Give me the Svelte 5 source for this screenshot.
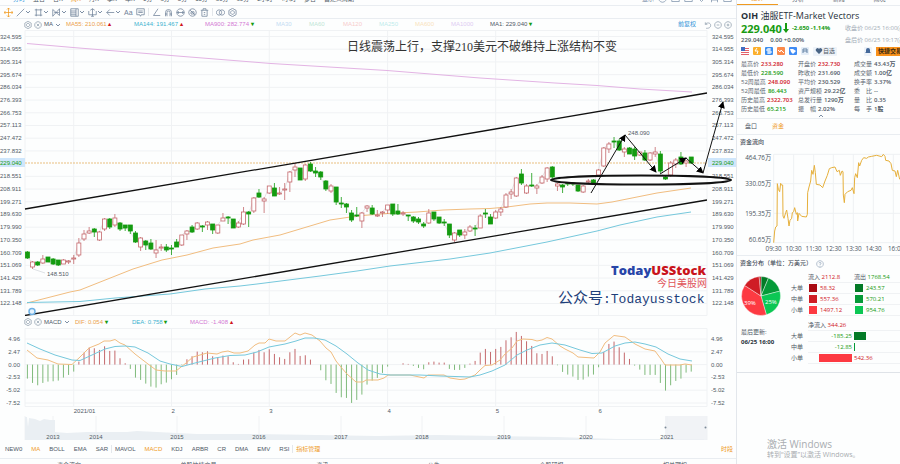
<script>
  const periods = [
    "分时", "五日", "日K", "周K", "月K", "季K", "年K", "1分", "3分", "5分", "15分", "30分",
    "60分", "2小时", "4小时", "多日",
  ];
  const footLinks = ["资金流向", "单股快捷交易", "资讯", "公告", "个股研报", "相关期权"];
  const indicators = ["NEW0", "MA", "BOLL", "EMA", "SAR"];
  const subIndicators = ["MAVOL", "MACD", "KDJ", "ARBR", "CR", "DMA", "EMV", "RSI"];

  // toolbar icons on a 12x12 grid
  const drawTools = [
    { name: "直线", d: "M1 11L11 1" },
    { name: "矩形", d: "M3 1v10M9 1v10M1 2.500h10M1 9.500h10" },
    { name: "形态", d: "M1 11V2l9 8V1L1 11M3 6h6" },
    { name: "斐波那契", d: "M1 1h10v10H1zM1 4h7M1 6.500h7M1 9h7M8 1v10" },
    { name: "测量", d: "M6 1v10M3 3l3-2 3 2M1 4v5h10V4M4 11h4" },
    { name: "箭头", d: "M11 6H1M5 2L1 6l4 4" },
  ];
  const plainTools = [
    { name: "角度", d: "M8 1L2 10h9" },
    { name: "磁铁", d: "M2 11V6a4 4 0 0 1 8 0v5M2 8h2V6a2 2 0 0 1 4 0v2h2M4 8v3M8 8v3" },
    { name: "锁定", d: "M6 1a5 5 0 1 0 .01 0M1 6h10M3 4v4M9 4v4" },
    { name: "隐藏", d: "M6 1a5 5 0 1 0 .01 0M2.500 2.500l7 7M4 5h4v3H4z" },
    { name: "删除", d: "M1 3h10M4 3V1h4v2M2.500 3v8h7V3M5 6h2M5 8.500h2" },
  ];
  const moreTools = [
    { name: "对比", d: "M4 2.500a3.500 3.500 0 1 0 .01 0M8 2.500a3.500 3.500 0 1 0 .01 0" },
    { name: "设置", d: "M6 .5l4.800 2.700v5.600L6 11.500 1.200 8.800V3.200zM6 3.500a2.500 2.500 0 1 0 .01 0" },
  ];

  const legend = [
    { text: "MA30", color: "#c3dcf3" },
    { text: "MA60", color: "#bfe6d6" },
    { text: "MA120", color: "#f7cccc" },
    { text: "MA250", color: "#bdecec" },
    { text: "MA600", color: "#f9e3bd" },
    { text: "MA1000", color: "#ddccf2" },
  ];

  const priceLabels = Array.from({ length: 22 }, (_, i) => ({
    y: 36.5 + i * 12.714,
    text: (324.595 - i * 9.640324).toFixed(3),
  })).filter((l, i) => i !== 10);
  const macdLabels = ["4.96", "2.47", "0.00", "-2.53", "-5.02", "-7.52"];
  const months = [
    [9, "2021/01"], [28, "2"], [47, "3"], [70, "4"], [91, "5"], [111, "6"],
  ];
  const years = [53, 96, 177, 259, 341, 422, 504, 586, 667];

  const xAt = (i) => 27.4 + i * 5.146;

  // direction, body top, body bottom, high, low
  const candles = `g252,258,251,259 r262,267,261,269 g262,265,261,266 r259,263,255,264 g257,262,257,262
    g259,264,258,265 g260,265,260,266 r260,264,259,264 r261,262,260,264 r258,259,255,264
    r243,255,238,257 r234,239,230,241 r231,233,227,234 g229,232,228,237 r232,240,231,241
    r219,229,218,231 g219,227,218,229 r218,225,214,227 g223,229,222,231 g225,228,225,231
    g225,231,225,234 g233,242,231,243 r238,247,237,251 g241,245,240,250 g243,249,239,250
    r250,253,240,258 r247,248,244,251 g247,250,244,252 g248,249,245,255 g242,247,239,247
    r235,245,235,246 r231,234,230,240 g227,232,225,233 r223,229,222,230 g226,227,225,232
    r222,225,221,230 g224,230,224,234 r225,233,225,234 r218,221,213,221 g217,218,216,224
    g219,228,219,228 r223,227,221,228 r212,224,207,225 g212,214,211,227 r198,211,197,213
    g193,197,189,198 r199,201,197,213 r186,193,186,194 g188,196,183,196 r193,194,187,195
    r189,190,183,200 r172,182,171,192 r167,170,163,177 g168,180,168,180 r165,179,164,181
    g164,171,162,172 g171,173,167,177 g172,177,171,180 g181,189,180,191 r186,191,184,193
    g187,202,187,205 g203,204,197,208 g204,207,203,213 g213,220,210,222 g215,216,207,217
    r213,221,212,228 r206,208,205,212 g208,214,205,215 r215,216,210,217 r212,213,211,217
    r205,210,205,214 g204,214,204,216 g211,214,204,215 r213,214,211,216 g215,216,215,221
    g217,221,216,223 g219,222,217,224 g224,226,222,228 r213,223,209,224 g212,219,212,221
    g217,223,217,224 g222,223,219,226 g224,235,224,238 r233,240,232,242 g230,235,230,237
    r232,235,229,239 r227,231,225,232 g228,229,225,236 r216,228,214,228 g213,214,209,218
    g217,224,214,224 r212,218,210,219 r209,212,207,216 r195,207,193,208 r192,194,189,199
    r178,196,177,197 g174,183,169,185 r186,193,184,194 g185,186,173,187 r186,188,184,194
    r177,183,175,184 r168,179,167,182 g167,177,166,179 r184,186,183,191 g185,187,184,193
    g183,184,182,186 g183,184,182,186 g185,191,185,192 r186,192,185,193 r181,182,179,184
    g180,183,179,184 r170,175,169,177 r148,166,147,167 r144,149,142,153 g141,142,137,148
    g141,150,139,151 r149,152,147,157 g148,154,147,154 g149,156,147,160 r152,155,152,156
    g153,160,150,161 r153,160,152,161 r152,154,147,157 g154,171,151,173 g177,179,176,180
    r163,175,161,177 r160,164,158,168 g157,164,152,165 r161,163,160,167 g157,163,157,164`
    .split(/\s+/)
    .map((s, i) => {
      const [top, bottom, high, low] = s.slice(1).split(",").map(Number);
      return { x: xAt(i), up: s[0] === "r", top, bottom, high, low };
    });
  const closes = candles.map((c) => `${c.x},${c.up ? c.top : c.bottom}`).join(" ");

  const bars = [
    -42, -55, -62, -55, -51, -50, -48, -39, -31, -21, 9, 36, 51, 49, 44, 55, 41, 42, 19, 4, -13, -39,
    -46, -57, -66, -69, -59, -54, -44, -31, -2, 16, 25, 39, 37, 40, 25, 22, 27, 25, 7, 2, 15, 16, 36,
    44, 37, 46, 32, 22, 17, 37, 47, 26, 28, 15, 0, -17, -47, -58, -85, -98, -100, -115, -106, -90, -60,
    -48, -40, -25, -6, 0, 0, 4, 2, -4, -10, -14, 7, 9, 6, 6, -13, -16, -16, -10, 3, 11, 36, 47, 38, 47,
    53, 73, 82, 98, 86, 70, 56, 34, 32, 41, 25, -2, -22, -30, -36, -46, -45, -36, -30, -8, 38, 62, 69,
    52, 36, 17, -3, -15, -31, -31, -31, -55, -78, -62, -49, -42, -24, -21,
  ];

  const stats = [
    ["最高价", "233.280", "red"], ["开盘价", "232.730", "red"], ["成交量", "43.43万", ""],
    ["最低价", "228.590", "green"], ["昨收价", "231.690", ""], ["成交额", "1.00亿", ""],
    ["52周最高", "248.090", "red"], ["平均价", "230.529", ""], ["换手率", "3.37%", ""],
    ["52周最低", "86.443", "green"], ["资产规模", "29.22亿", ""], ["委　比", "--", ""],
    ["历史最高", "2322.703", "red"], ["总发行量", "1290万", ""], ["量　比", "0.35", ""],
    ["历史最低", "65.215", "green"], ["振　幅", "2.02%", ""], ["每　手", "1股", ""],
  ];

  const flows = [
    { size: "大单", inflow: "58.32", inColor: "#a90b12", outflow: "243.57", outColor: "#037a26" },
    { size: "中单", inflow: "557.36", inColor: "#cf1d25", outflow: "570.21", outColor: "#059a38" },
    { size: "小单", inflow: "1497.12", inColor: "#fd3a42", outflow: "954.76", outColor: "#0cc754" },
  ];
  const nets = [
    { size: "大单", value: -185.25, color: "#037a26" },
    { size: "中单", value: -12.85, color: "#059a38" },
    { size: "小单", value: 542.36, color: "#fd3a42" },
  ];

  const total = flows.reduce((sum, f) => sum + Number(f.inflow) + Number(f.outflow), 0);
  let angle = 0;
  const slices = [
    ...flows.map((f) => [f.outflow, f.outColor]),
    ...flows.map((f) => [f.inflow, f.inColor]).reverse(),
  ].map(([value, color]) => {
    const from = angle;
    angle += (value / total) * Math.PI * 2;
    const p = (a) => `${20 + 19.5 * Math.sin(a)} ${20 - 19.5 * Math.cos(a)}`;
    return { color, d: `M20 20L${p(from)}A19.5 19.5 0 0 1 ${p(angle)}Z` };
  });
</script>

{#snippet icon(d)}
  <svg class="icon" viewBox="0 0 12 12" aria-hidden="true"><path {d} /></svg>
{/snippet}

{#snippet chevron()}
  <svg class="chevron" viewBox="0 0 6 6" aria-hidden="true"><path d="M1 2l2 2 2-2" /></svg>
{/snippet}

{#snippet paneButtons()}
  <span class="pane-buttons">
    <button aria-label="设置">{@render icon(moreTools[1].d)}</button>
    <button aria-label="关闭">{@render icon("M6 1a5 5 0 1 0 .01 0M4 4l4 4M8 4l-4 4")}</button>
  </span>
{/snippet}

<div class="app">
  <main>
    <nav class="periods">
      {#each periods as period, i}
        <a href="#period" class:blue={i === 0} class:orange={i === 3}>{period}</a>
      {/each}
      <a href="#period">自定义周期</a>
      <span class="right">
        <a href="#show">显示</a>
        {@render icon("M6 1a5 5 0 1 0 .01 0M4 6h4")}
        {@render icon("M1 1h10v9H1z")}
        {@render icon("M1 1h10v9H1z")}
        {@render icon("M3 1h6v6l-3 3-3-3z")}
        {@render icon("M2 1v10M2 8h8M10 1v10")}
        {@render icon("M1 1h10v9H1z")}
      </span>
    </nav>

    <div class="toolbar">
      <button class="orange" aria-label="移动">
        {@render icon("M6 0v12M0 6h12M4 2l2-2 2 2M4 10l2 2 2-2M2 4L0 6l2 2M10 4l2 2-2 2")}
      </button>
      {#each drawTools as tool}
        <button aria-label={tool.name}>{@render icon(tool.d)}{@render chevron()}</button>
      {/each}
      <button>Aa</button>
      <button aria-label="注释">{@render icon("M1 1h10v8H7l-1 2-1-2H1zM3 4h6M3 6h6")}</button>
      <i></i>
      {#each plainTools as tool}
        <button aria-label={tool.name}>{@render icon(tool.d)}</button>
      {/each}
      <i></i>
      {#each moreTools as tool}
        <button aria-label={tool.name}>{@render icon(tool.d)}</button>
      {/each}
    </div>

    <div class="pane-head price-head">
      <span class="pane-name">{@render paneButtons()}MA {@render chevron()}</span>
      <span class="ma55">MA55: 210.061 <b class="red">▴</b></span>
      <span class="ma144">MA144: 191.467 <b class="red">▴</b></span>
      <span class="ma900">MA900: 282.774 <b class="green">▾</b></span>
      {#each legend as item}
        <span style:color={item.color}>{item.text}</span>
      {/each}
      <span>MA1: 229.040 <b class="green">▾</b></span>
      <span class="pane-tools">
        <a href="#adjust">前复权</a>
        <button aria-label="重置">{@render icon("M2 2v3h3M2 5c2-3 8-3 8 1.500S5 11 3 11")}</button>
        <button aria-label="缩小">{@render icon("M6 1a5 5 0 1 0 .01 0M4 6h4")}</button>
        <button aria-label="放大">{@render icon("M6 1a5 5 0 1 0 .01 0M4 6h4M6 4v4")}</button>
      </span>
    </div>

    <svg class="chart" viewBox="0 30 736 286">
      <defs>
        <marker id="head" viewBox="0 0 8 8" refX="7" refY="4" markerWidth="7" markerHeight="7" markerUnits="userSpaceOnUse" orient="auto">
          <path d="M0 0L8 4L0 8Z" />
        </marker>
      </defs>
      <g class="grid">
        {#each priceLabels as label}
          <line x1="25" x2="707" y1={label.y} y2={label.y} />
        {/each}
        {#each months as [i]}
          <line x1={xAt(i)} x2={xAt(i)} y1="30" y2="315.5" />
        {/each}
        <path d="M25 30.500H707V315.500H25Z" />
      </g>
      <rect class="tag" x="0" y="158" width="25" height="9" />
      <rect class="tag" x="708" y="158" width="28" height="9" />
      <g class="axis">
        {#each priceLabels as label}
          <text x="0" y={label.y + 2}>{label.text}</text>
          <text x="712" y={label.y + 2}>{label.text}</text>
        {/each}
        <text class="now" x="0" y="165">229.040</text>
        <text class="now" x="712" y="165">229.040</text>
        <text x="47" y="276">148.510</text>
        <text x="628" y="135">248.090</text>
      </g>
      <path class="leader" d="M33 269L45 273" />
      <line class="last" x1="25" x2="707" y1="163" y2="163" />

      <polyline class="line purple" points="27,43.5 73,47.5 171,55.5 240,61 271,63.5 387,70.5 480,78 555,83 597,85.5 640,89 692,92" />
      <polyline class="line amber" points="27,303 70,292 80,290 133,269 162,260 187,255 213,248 240,244 253,240 280,235 310,226 330,220 357,216 387,213.5 417,212 443,210 470,209 490,208.500 507,207 530,204 547,203 570,203 597,204 612,202 627,199 657,193 691,188" />
      <polyline class="line sky" points="27,302.5 80,301.5 115,298 170,294 205,289 240,286 257,284 320,276 357,271 390,266 450,259 490,253 547,242 597,231 620,225 657,217 691,212" />
      <polyline class="closes" points={closes} />
      {#each candles as c}
        <g class={c.up ? "up" : "down"}>
          <path d="M{c.x} {c.high}V{c.top}M{c.x} {c.bottom}V{c.low}" />
          <rect x={c.x - 2} y={c.top} width="4" height={c.bottom - c.top} />
        </g>
      {/each}

      <g class="ink">
        <path d="M25 209L707 93M25 315.500L707 200" />
        <ellipse cx="641" cy="180" rx="90" ry="4.5" />
        <g class="arrows">
          <line x1="591" y1="193" x2="625" y2="135" />
          <line x1="625" y1="135" x2="656" y2="172" />
          <line x1="660" y1="174" x2="686" y2="158" />
          <line x1="686" y1="158" x2="703" y2="173" />
          <line x1="703" y1="173" x2="723" y2="102" />
        </g>
      </g>
      <circle class="pin" cx="32" cy="311.5" r="3" />

      <text class="headline" x="482" y="51">日线震荡上行，支撑210美元不破维持上涨结构不变</text>
      <text class="logo" x="706" y="275">Today<tspan>USStock</tspan></text>
      <text class="logo-cn" x="707" y="287">今日美股网</text>
      <text class="account" x="558" y="303">公众号<tspan>:Todayusstock</tspan></text>
    </svg>

    <div class="pane-head macd-head">
      <span class="pane-name">{@render paneButtons()}MACD {@render chevron()}</span>
      <span class="ma55">DIF: 0.054 <b class="green">▾</b></span>
      <span class="ma144">DEA: 0.758 <b class="green">▾</b></span>
      <span class="ma900">MACD: -1.408 <b class="red">▴</b></span>
    </div>

    <svg class="chart" viewBox="0 328 736 88">
      <g class="grid">
        {#each macdLabels as label, i}
          <line x1="25" x2="707" y1={339 + i * 12.8} y2={339 + i * 12.8} />
        {/each}
        {#each months as [i]}
          <line x1={xAt(i)} x2={xAt(i)} y1="328" y2="406.5" />
        {/each}
        <path d="M25 328.500H707V406.500H25Z" />
      </g>
      <g class="axis">
        {#each macdLabels as label, i}
          <text class="end" x="20" y={341 + i * 12.8}>{label}</text>
          <text x="711" y={341 + i * 12.8}>{label}</text>
        {/each}
        {#each months as [i, label]}
          <text x={xAt(i)} y="413">{label}</text>
        {/each}
      </g>
      {#each bars as bar, i}
        <line class={bar > 0 ? "bar up" : "bar down"} x1={xAt(i)} x2={xAt(i)} y1="364.6" y2={364.6 - bar / 3} />
      {/each}
      <polyline class="line amber" points="27,350 37,358 48,360 58,364 72,364.5 80,357 89,348 99,344 104,341 110,341 115,339.5 120,343 125,345 135,354 148,364 156,370 165,371 176,371 186,363 193,357 207,353 217,354 222,352 228,351 234,353 240,353 248,351 255,345 259,343 265,343 269,339 276,341 285,341 290,337 295,333 300,335 305,333 312,335 320,341 326,348 331,352 336,361 340,366 347,374 356,382 363,382 366,380 378,380 384,378 388,375 410,375 424,378 428,375 444,375 450,378 460,379.5 465,379 475,375 480,370 485,365.5 492,365 500,360 505,354 512,348 517,341 523,339 532,339.5 537,341 542,340 547,337.5 552,339 560,346 565,349 573,353 578,357 594,358 600,352 605,343 611,338 614,335.5 625,337 635,344 645,349 655,351 661,359 665,365 680,365 685,364 692,365" />
      <polyline class="line sky" points="27,343 40,349 55,355 72,360 80,360.5 92,355 105,349 115,346.5 125,346 135,347 148,353 160,361 170,364 182,366.5 195,363 215,358 230,355.5 245,355 257,352 269,347 285,344 296,341 305,338 314,338 325,340 336,346 347,354 358,363 368,370 380,374 390,375 420,375 440,376 470,377 480,375 492,371 505,365 517,355 527,350 540,345 552,343 565,345 580,350 592,353.5 602,353 615,346 625,343 635,342 645,344 656,347 668,354 680,359 692,361" />
    </svg>

    <svg class="chart" viewBox="0 416 736 24">
      <g class="grid">
        <path d="M25 416V440H707V416" />
        {#each years as x}
          <line x1={x} x2={x} y1="416" y2="440" />
        {/each}
      </g>
      <path class="history" d="M25 417h2l1 10 1-9 6 1 5 2 4-2 6 1h5v12l12 1 20-1 40 0 10-1 20 1 20 1 20 1h60l60 1 60 1 60-1 60 1 60 1 60 2 87 0V440H25Z" />
      <rect class="window" x="665" y="416" width="42" height="24" />
      <circle class="handle" cx="665.5" cy="427.5" r="1" />
      <circle class="handle" cx="705.5" cy="427.5" r="1" />
      <g class="axis middle">
        {#each years as x, i}
          <text {x} y="439">{2013 + i}</text>
        {/each}
      </g>
    </svg>

    <nav class="indicators">
      {#each indicators as name}
        <a href="#indicator" class:orange={name === "MA"}>{name}</a>
      {/each}
      <i></i>
      {#each subIndicators as name}
        <a href="#indicator" class:orange={name === "MACD"}>{name}</a>
      {/each}
      <i></i>
      <a href="#manage" class="orange">指标管理</a>
      <a href="#session" class="orange right">时段</a>
    </nav>

    <nav class="foot">
      {#each footLinks as link}
        <a href="#foot">{link}</a>
      {/each}
    </nav>
  </main>

  <aside>
    <nav class="side-tabs">
      <a href="#quote" class="current">报价</a>
      <a href="#analysis">分析</a>
      <a href="#news">新闻</a>
      <a href="#brief">简况</a>
    </nav>

    <section class="quote">
      <h1>OIH <span>油服ETF-Market Vectors</span></h1>
      <div class="quote-row">
        <strong class="price">229.040</strong>
        <svg class="drop" viewBox="0 0 6 11" aria-hidden="true"><path d="M2 0h2v6h2l-3 4-3-4h2z" /></svg>
        <b class="change">-2.650 -1.14%</b>
        <span class="when">收盘价 06/25 16:00(美东)</span>
      </div>
      <div class="quote-row after">
        <b>229.040</b>
        <b>0.00 +0.00%</b>
        <span class="when">盘后价 06/25 19:17(美东)</span>
      </div>
      <div class="badges">
        <svg viewBox="0 0 8 8" aria-hidden="true">
          <path fill="#fff" d="M0 0h8v8H0z" />
          <path stroke="#e2606a" d="M0 1.500h8M0 3.500h8M0 5.500h8M0 7.500h8" />
          <path fill="#3f6cc0" d="M0 0h4v4H0z" />
        </svg>
        <svg viewBox="0 0 8 8" aria-hidden="true"><rect width="8" height="8" rx="1" fill="#fbaf2c" /><path fill="none" stroke="#fff" d="M4 1L2 4h3L4 7" /></svg>
        <svg viewBox="0 0 8 8" aria-hidden="true"><rect width="8" height="8" rx="1" fill="#3b8ef0" /><path fill="none" stroke="#fff" d="M6 2H2v2h4v2H2M4 1v6" /></svg>
        <svg viewBox="0 0 8 8" aria-hidden="true"><rect width="8" height="8" rx="1" fill="#fb8a4a" /><path fill="none" stroke="#fff" d="M1 3l2 2 1-2 3 3" /></svg>
        <svg viewBox="0 0 8 8" aria-hidden="true"><rect width="8" height="8" rx="1" fill="#3f8cf5" /><path fill="#fff" d="M1 2h3l3 2-3 3-2-2z" /></svg>
        <svg viewBox="0 0 8 8" aria-hidden="true"><rect width="8" height="8" rx="1" fill="#e4edf7" /><path fill="none" stroke="#6583a5" d="M2 6V2h4v4M2 4h4" /></svg>
        <button class="pick">
          <svg viewBox="0 0 8 8" aria-hidden="true"><path fill="#4a6585" d="M4 7L1 4a1.800 1.800 0 0 1 3-2 1.800 1.800 0 0 1 3 2z" /></svg>自选
        </button>
        <button class="bell" aria-label="提醒">
          <svg viewBox="0 0 8 8" aria-hidden="true"><path fill="#44699a" d="M1 6l1-1V3a2 2 0 0 1 4 0v2l1 1zM3 7h2" /></svg>
        </button>
        <button class="trade">快捷交易</button>
      </div>
      <dl class="stats">
        {#each stats as [label, value, tone]}
          <div><dt>{label}</dt><dd class={tone}>{value}</dd></div>
        {/each}
      </dl>
      <button class="collapse" aria-label="收起">
        <svg viewBox="0 0 6 4" aria-hidden="true"><path d="M1 3l2-2 2 2" /></svg>
      </button>
    </section>

    <nav class="sub-tabs">
      <a href="#book">盘口</a>
      <a href="#capital" class="orange">资金</a>
    </nav>

    <section class="flow">
      <h2>资金流向</h2>
      <svg class="chart" viewBox="6 48 489 324">
        <g class="flow-grid">
          <path d="M116 70H495M116 158H495M116 247H495M116 335H495" />
          <path d="M116 70V335M176 70V335M236 70V335M295 70V335M355 70V335M415 70V335M475 70V335" />
        </g>
        <g class="flow-axis">
          <text class="end" x="109" y="87">464.76万</text>
          <text class="end" x="109" y="166">330.05万</text>
          <text class="end" x="109" y="255">195.35万</text>
          <text class="end" x="109" y="333">60.65万</text>
          {#each ["09:30", "10:30", "11:30", "12:30", "13:30", "14:30"] as time, i}
            <text class="mid" x={116 + i * 60} y="359">{time}</text>
          {/each}
          <text x="459" y="359">16:00</text>
        </g>
        <polyline class="flow-line" points="116,335 119,300 122,288 126,285 127,158 130,175 134,182 137,157 139,162 143,162 144,255 147,262 152,245 155,237 159,262 162,285 165,268 170,262 172,245 176,242 179,230 184,250 187,245 188,270 192,247 200,256 214,258 217,250 218,185 222,168 227,150 230,118 234,130 238,103 241,125 244,160 255,162 263,170 270,150 277,133 283,113 290,110 300,108 306,122 313,118 316,133 321,120 324,122 325,192 328,215 330,190 338,182 348,178 352,170 357,188 359,140 362,128 367,140 371,95 374,105 380,88 386,80 395,82 400,78 410,76 425,73 440,77 445,70 450,76 452,88 462,90 468,98 472,118 480,120 484,137 488,118 494,145" />
      </svg>
    </section>

    <section class="spread">
      <h2>
        资金分布（单位：万美元）
        <svg viewBox="0 0 12 12" aria-hidden="true"><path d="M6 1a5 5 0 1 0 .01 0M4.500 5a1.500 1.500 0 1 1 1.500 1.500V8M6 9v1" /></svg>
      </h2>
      <div class="spread-body">
        <div class="pie">
          <svg viewBox="0 0 40 40">
            {#each slices as slice}
              <path d={slice.d} fill={slice.color} />
            {/each}
            <text x="3" y="29">39%</text>
            <text x="24" y="28">25%</text>
          </svg>
          <p>最后更新:<b>06/25 16:00</b></p>
        </div>
        <div>
          <table class="inout">
            <thead>
              <tr>
                <td></td>
                <th>流入 <b class="red">2112.8</b></th>
                <th>流出 <b class="green">1768.54</b></th>
              </tr>
            </thead>
            <tbody>
              {#each flows as f}
                <tr>
                  <th>{f.size}</th>
                  <td class="red"><i style:background={f.inColor}></i>{f.inflow}</td>
                  <td class="green"><i style:background={f.outColor}></i>{f.outflow}</td>
                </tr>
              {/each}
            </tbody>
          </table>
          <table class="net">
            <thead>
              <tr>
                <td></td>
                <th colspan="2">净流入 <b class="red">344.26</b></th>
              </tr>
            </thead>
            <tbody>
              {#each nets as n}
                <tr>
                  <th>{n.size}</th>
                  {#if n.value < 0}
                    <td class="left green">{n.value}</td>
                    <td><i style:background={n.color} style:width="{-n.value / 7.2}%"></i></td>
                  {:else}
                    <td class="left"><i style:background={n.color} style:width="{n.value / 7.2}%"></i></td>
                    <td class="red">{n.value}</td>
                  {/if}
                </tr>
              {/each}
            </tbody>
          </table>
        </div>
      </div>
    </section>

    <p class="activate">激活 Windows<small>转到“设置”以激活 Windows。</small></p>
  </aside>
</div>

<style>
  :global(body) {
    margin: 0;
    background: #fff;
  }

  .app {
    display: grid;
    grid-template-columns: minmax(0, 736fr) minmax(0, 164fr);
    min-height: 100vh;
    font: 6px/9px "Liberation Sans", "Noto Sans CJK SC", sans-serif;
    color: #4f5965;
    background: #fdfefe;
  }

  main {
    display: flex;
    flex-direction: column;
    height: 100vh;
    overflow: hidden;
  }

  a {
    color: inherit;
    text-decoration: none;
  }
  button {
    display: flex;
    align-items: center;
    padding: 0;
    border: 0;
    background: none;
    font: inherit;
    color: inherit;
    cursor: pointer;
  }
  h1,
  h2,
  p,
  dl,
  dd {
    margin: 0;
  }

  .red {
    color: #d0161f;
  }
  .green {
    color: #179b11;
  }
  .blue {
    color: #3a9be0;
  }
  .orange {
    color: #ef9a1f !important;
  }
  .right {
    margin-left: auto;
  }

  .icon {
    width: 9px;
    height: 9px;
    fill: none;
    stroke: currentColor;
    stroke-width: 1;
  }
  .chevron {
    width: 6px;
    height: 6px;
    fill: none;
    stroke: #7d8fa5;
  }

  .periods {
    display: flex;
    align-items: flex-end;
    gap: 8px;
    height: 3px;
    padding: 0 4px 2px 13px;
    border-bottom: 1px solid #e9edf1;
    line-height: 8px;
    white-space: nowrap;
    overflow: hidden;
    flex: none;
  }
  .periods .right {
    display: flex;
    align-items: flex-end;
    gap: 4px;
    color: #7d93ab;
  }

  .toolbar {
    display: flex;
    align-items: center;
    gap: 3px;
    height: 12px;
    padding-left: 4px;
    border-bottom: 1px solid #e9edf1;
    color: #6d8098;
    font-size: 7px;
    flex: none;
  }
  .toolbar i,
  .indicators i {
    width: 1px;
    height: 8px;
    background: #e3e7eb;
  }

  .pane-head {
    display: grid;
    align-items: center;
    padding: 0 4px 0 24px;
    white-space: nowrap;
    flex: none;
  }
  .price-head {
    height: 11px;
    grid-template-columns: 42px 68px 71px 71px 33px 34px 36px 36px 36px 39px 1fr auto;
  }
  .macd-head {
    height: 12px;
    grid-template-columns: 51px 57px 58px 1fr;
  }
  .pane-name,
  .pane-buttons,
  .pane-tools {
    display: flex;
    align-items: center;
    gap: 2px;
  }
  .pane-head .icon {
    width: 8px;
    height: 8px;
    stroke: #8494a5;
  }
  .pane-tools a {
    color: #2f94d8;
    margin-right: 6px;
  }
  .ma55 {
    color: #eba04a;
  }
  .ma144 {
    color: #3cb2cf;
  }
  .ma900 {
    color: #d378d3;
  }

  .chart {
    display: block;
    width: 100%;
    height: auto;
    flex: none;
  }
  .grid {
    fill: none;
    stroke: #f0f2f4;
  }
  .axis {
    font-size: 6px;
    fill: #515b66;
  }
  .end {
    text-anchor: end;
  }
  .middle,
  .mid {
    text-anchor: middle;
  }
  .tag {
    fill: #cfe6fb;
  }
  .now {
    fill: #179b11;
  }
  .leader,
  .closes {
    fill: none;
    stroke: #dfe2e6;
  }
  .closes {
    stroke: #cfc9cc;
    stroke-width: 0.5;
  }
  .last {
    stroke: #e9bf80;
    stroke-dasharray: 2 1;
  }
  .line {
    fill: none;
    stroke-width: 1;
  }
  .purple {
    stroke: #e3b4e4;
  }
  .amber {
    stroke: #f1bd80;
  }
  .sky {
    stroke: #76c8dc;
  }
  .up {
    fill: #fff;
    stroke: #c4686c;
    stroke-width: 0.8;
  }
  .down {
    fill: #149b10;
    stroke: #149b10;
    stroke-width: 0.8;
  }
  .bar {
    stroke-width: 1;
  }
  .bar.down {
    stroke: #7fba7b;
  }
  .ink {
    fill: none;
    stroke: #111;
    stroke-width: 1.3;
  }
  .ink ellipse {
    stroke-width: 2;
  }
  .arrows line {
    marker-end: url(#head);
    stroke-width: 1;
  }
  .pin {
    fill: #e6f3fd;
    stroke: #6fb1e4;
    stroke-width: 1.5;
  }
  .headline {
    font: 12px "Liberation Serif", "Noto Sans CJK SC", serif;
    fill: #333;
    text-anchor: middle;
  }
  .logo {
    font: 800 13px "Open Sans", sans-serif;
    fill: #2745a8;
    text-anchor: end;
  }
  .logo tspan {
    fill: #c9141c;
  }
  .logo-cn {
    font-size: 10px;
    fill: #e05459;
    text-anchor: end;
  }
  .account {
    font: 15px "Noto Sans CJK SC", sans-serif;
    fill: #1e3f7a;
  }
  .account tspan {
    font: 13px "Liberation Mono", monospace;
  }
  .history {
    fill: #eaeff3;
  }
  .window {
    fill: #edf0f4;
    fill-opacity: 0.8;
  }
  .handle {
    fill: #7d8b99;
  }

  .indicators {
    display: flex;
    align-items: center;
    gap: 9px;
    height: 18px;
    padding: 0 3px 0 5px;
    border-bottom: 1px solid #e9edf1;
    flex: none;
  }
  .indicators i {
    margin: 0 -6px;
  }
  .foot {
    display: flex;
    justify-content: space-between;
    padding: 2px 49px 0 57px;
    flex: 1;
    min-height: 0;
    overflow: hidden;
  }

  aside {
    display: flex;
    flex-direction: column;
    height: 100vh;
    box-sizing: border-box;
    border-left: 1px solid #e3e7ec;
    font-family: "Open Sans", "Noto Sans CJK SC", sans-serif;
    overflow: hidden;
    white-space: nowrap;
  }
  .side-tabs {
    display: flex;
    align-items: flex-end;
    height: 5px;
    border-bottom: 1px solid #e9edf1;
    text-align: center;
    line-height: 12px;
    overflow: hidden;
    flex: none;
  }
  .side-tabs a {
    flex: 1;
  }
  .side-tabs .current {
    color: #ef9a1f;
    border-bottom: 1px solid #ef9a1f;
  }

  .quote {
    padding: 4px 0 0 4px;
    border-bottom: 1px solid #e9edf1;
  }
  h1 {
    font-size: 9px;
    line-height: 12px;
    font-weight: 700;
    color: #27303a;
  }
  h1 span {
    font-weight: 400;
  }
  .quote-row {
    display: flex;
    align-items: center;
    height: 13px;
  }
  .price {
    font-size: 11px;
    color: #179b11;
  }
  .drop {
    width: 6px;
    height: 11px;
    margin: 0 3px 0 1px;
    fill: #179b11;
  }
  .change {
    color: #179b11;
  }
  .when {
    margin-left: auto;
    width: 55px;
    color: #a3acb6;
  }
  .after {
    height: 10px;
    gap: 7px;
    color: #4b5662;
  }
  .after b {
    font-weight: 600;
  }
  .badges {
    display: flex;
    align-items: center;
    gap: 4px;
    height: 12px;
  }
  .badges svg {
    width: 8px;
    height: 8px;
    flex: none;
  }
  .pick,
  .bell {
    height: 9px;
    padding: 0 2px;
    background: #eef3f9;
    border-radius: 1px;
  }
  .bell {
    margin-left: auto;
    padding: 0;
  }
  .trade {
    width: 24px;
    height: 9px;
    padding-left: 2px;
    background: #f9921b;
    color: #3b2a12;
    font-weight: 700;
    overflow: hidden;
  }
  .stats {
    display: grid;
    grid-template-columns: 57fr 56fr 46fr;
    padding-top: 3px;
  }
  .stats div {
    display: flex;
    gap: 2px;
  }
  .stats dt {
    color: #5c6671;
  }
  .stats dd {
    font-weight: 600;
  }
  .collapse {
    width: 100%;
    justify-content: center;
  }
  .collapse svg {
    width: 6px;
    height: 4px;
    fill: none;
    stroke: #7d8fa5;
  }

  .sub-tabs {
    display: flex;
    gap: 15px;
    padding: 3px 8px;
    border-bottom: 1px solid #e9edf1;
  }
  .flow {
    padding-top: 3px;
    border-bottom: 1px solid #e9edf1;
  }
  h2 {
    display: flex;
    align-items: center;
    gap: 4px;
    padding-left: 3px;
    font-size: 6px;
    font-weight: 500;
    line-height: 9px;
    color: #3f4a56;
  }
  h2 svg {
    width: 8px;
    height: 8px;
    fill: none;
    stroke: #93a5b9;
  }
  .flow-grid {
    fill: none;
    stroke: #eef1f3;
    stroke-width: 3;
  }
  .flow-axis {
    font-size: 19px;
    fill: #4b5662;
  }
  .flow-line {
    fill: none;
    stroke: #e6b03c;
    stroke-width: 3;
  }

  .spread {
    padding: 3px 0 8px;
    border-bottom: 1px solid #dfe3e8;
  }
  .spread-body {
    display: grid;
    grid-template-columns: 50fr 109fr;
    padding: 4px 0 0 4px;
  }
  .pie svg {
    display: block;
    width: 40px;
    height: 40px;
    margin-top: 4px;
  }
  .pie path {
    stroke: #fff;
    stroke-width: 0.4;
  }
  .pie text {
    font-size: 6px;
    fill: #fff;
  }
  .pie p {
    padding-top: 11px;
    line-height: 10px;
  }
  .pie b {
    display: block;
    color: #27303a;
  }

  table {
    width: 100%;
    border-collapse: collapse;
    table-layout: fixed;
  }
  th,
  td {
    height: 10px;
    padding: 0;
    line-height: 10px;
    font-weight: 400;
    text-align: left;
  }
  th b {
    font-weight: 400;
  }
  tr > :first-child {
    width: 17px;
  }
  tbody td {
    border: 1px solid #f0f2f4;
    border-width: 1px 0;
  }
  .inout i {
    display: inline-block;
    width: 8px;
    height: 8px;
    margin: 0 3px 0 1px;
    vertical-align: middle;
  }
  .net {
    margin-top: 4px;
  }
  .net i {
    display: inline-block;
    height: 8px;
    vertical-align: middle;
  }
  .net .left {
    padding-right: 2px;
    text-align: right;
  }

  .activate {
    margin-top: auto;
    padding: 0 0 4px 30px;
    font-size: 10px;
    line-height: 12px;
    color: #a9adb1;
  }
  .activate small {
    display: block;
    font-size: 7px;
    line-height: 10px;
  }
</style>
